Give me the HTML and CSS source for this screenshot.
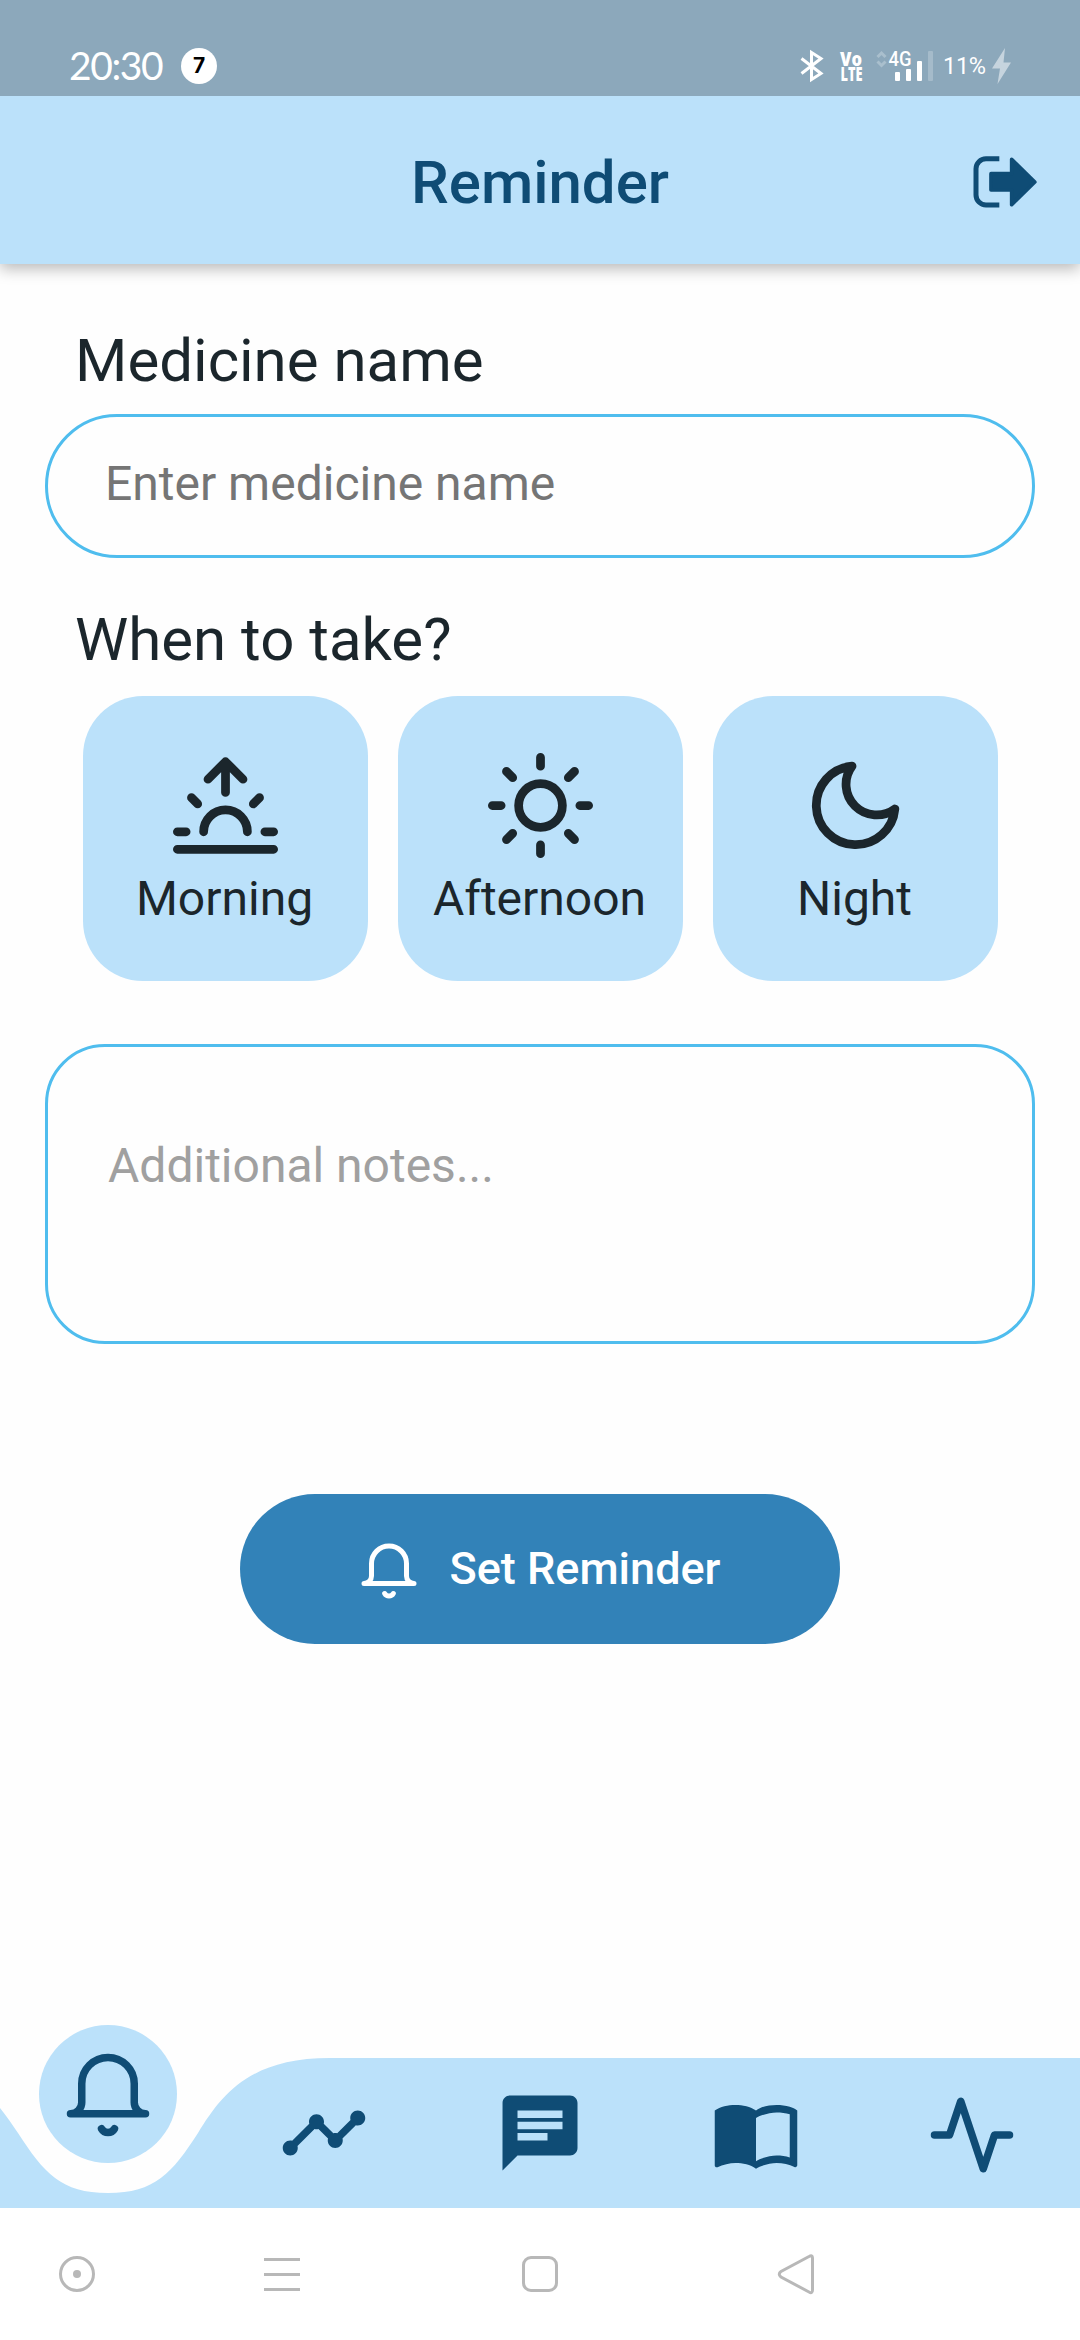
FILE: index.html
```html
<!DOCTYPE html>
<html lang="en">
<head>
<meta charset="utf-8">
<title>Reminder</title>
<link rel="stylesheet" href="styles.css">
</head>
<body>
<div class="screen">
  <div class="status">
    <span class="clock">20:30</span>
    <span class="count">7</span>
    <svg class="indicators" width="220" height="40" viewBox="796 46 220 40">
      <path class="bt" d="M801.5 58.500L821 73.500L811.500 79.500V52.500L821 58.500L801.500 73.500"/>
      <g class="volte">
        <text x="840" y="65.500" font-size="19" textLength="22" lengthAdjust="spacingAndGlyphs">Vo</text>
        <text x="840.500" y="81" font-size="19" textLength="22" lengthAdjust="spacingAndGlyphs">LTE</text>
      </g>
      <path class="updown" d="M877.500 57l4-4 4 4M877.500 61.500l4 4 4-4"/>
      <text class="gen" x="888.500" y="66" font-size="20" textLength="23" lengthAdjust="spacingAndGlyphs">4G</text>
      <rect class="bar" x="895" y="72" width="5" height="9" rx="1"/>
      <rect class="bar" x="906" y="69" width="5" height="12" rx="1"/>
      <rect class="bar" x="917" y="61" width="5" height="20" rx="1"/>
      <rect class="bar faint" x="928" y="51" width="5" height="30" rx="1"/>
      <text class="batt" x="943" y="74" font-size="23.500" textLength="43" lengthAdjust="spacing">11%</text>
      <path class="bolt" d="M1005 48L992 68.500H1000L997.500 84L1011 62.500H1003.500Z"/>
    </svg>
  </div>

  <header class="appbar">
    <h1 class="title">Reminder</h1>
    <svg class="logout" width="64" height="52" viewBox="219 196 192 156">
      <path class="bracket" d="M290.500 204.500H258a30 30 0 0 0-30 30V313a30 30 0 0 0 30 30h32.500"/>
      <path class="arrow" d="M273 249H335V206L404.500 274L335 342V298H273Z"/>
    </svg>
  </header>

  <main class="content">
    <label class="label">Medicine name</label>
    <div class="field">Enter medicine name</div>
    <div class="label label-when">When to take?</div>
    <div class="times">
      <div class="time">
        <svg class="line" width="105" height="105" viewBox="0 0 24 24"><path d="M17 18a5 5 0 0 0-10 0M12 2v7M4.220 10.220l1.420 1.420M1 18h2M21 18h2M18.360 11.640l1.420-1.420M23 22H1M8 6l4-4 4 4"/></svg>
        <span>Morning</span>
      </div>
      <div class="time">
        <svg class="line" width="105" height="105" viewBox="0 0 24 24"><circle cx="12" cy="12" r="5"/><path d="M12 1v2M12 21v2M4.220 4.220l1.420 1.420M18.360 18.360l1.420 1.420M1 12h2M21 12h2M4.220 19.780l1.420-1.420M18.360 5.640l1.420-1.420"/></svg>
        <span>Afternoon</span>
      </div>
      <div class="time">
        <svg class="line" width="105" height="105" viewBox="0 0 24 24"><path d="M21 12.790A9 9 0 1 1 11.210 3 7 7 0 0 0 21 12.790z"/></svg>
        <span>Night</span>
      </div>
    </div>
    <div class="notes">Additional notes...</div>
    <div class="button">
      <svg class="line" width="60" height="60" viewBox="0 0 24 24"><path d="M22 17H2a3 3 0 0 0 3-3V9a7 7 0 0 1 14 0v5a3 3 0 0 0 3 3zM13.730 21a2 2 0 0 1-3.460 0"/></svg>
      <span>Set Reminder</span>
    </div>
  </main>

  <nav class="tabs">
    <svg class="wave" width="1080" height="150" viewBox="0 2058 1080 150"><path d="M-2 2105.500C6 2115 12 2124 18 2133C44 2173 61 2193 108 2193S172 2173 198 2133C222 2094 250 2058 330 2058H1080V2208H-2Z"/></svg>
    <div class="tab active">
      <div class="bubble"><svg class="line" width="90" height="90" viewBox="0 0 24 24"><path d="M22 17H2a3 3 0 0 0 3-3V9a7 7 0 0 1 14 0v5a3 3 0 0 0 3 3zM13.730 21a2 2 0 0 1-3.460 0"/></svg></div>
    </div>
    <div class="tab"><svg class="solid" width="90" height="90" viewBox="0 0 24 24"><path d="M23 8c0 1.100-.9 2-2 2-.18 0-.35-.02-.51-.07l-3.560 3.550c.05.16.07.34.07.52 0 1.100-.9 2-2 2s-2-.9-2-2c0-.18.02-.36.07-.52l-2.550-2.550c-.16.05-.34.07-.52.07s-.36-.02-.52-.07l-4.550 4.560c.05.16.07.33.07.51 0 1.100-.9 2-2 2s-2-.9-2-2 .9-2 2-2c.18 0 .35.02.51.07l4.560-4.550C8.020 9.360 8 9.180 8 9c0-1.100.9-2 2-2s2 .9 2 2c0 .18-.02.36-.07.52l2.550 2.550c.16-.05.34-.07.52-.07s.36.02.52.07l3.550-3.560C19.020 8.350 19 8.180 19 8c0-1.100.9-2 2-2s2 .9 2 2z"/></svg></div>
    <div class="tab"><svg class="solid" width="90" height="90" viewBox="0 0 24 24"><path d="M20 2H4c-1.100 0-1.990.9-1.990 2L2 22l4-4h14c1.100 0 2-.9 2-2V4c0-1.100-.9-2-2-2zM6 6h12v2H6zM6 9h12v2H6zM6 12h8v2H6z"/></svg></div>
    <div class="tab"><svg class="solid" width="90" height="90" viewBox="0 0 24 24"><path d="M21 5c-1.110-.35-2.330-.5-3.500-.5-1.950 0-4.050.4-5.500 1.500-1.450-1.100-3.550-1.500-5.500-1.500S2.450 4.900 1 6v14.650c0 .25.25.5.5.5.1 0 .15-.05.25-.05C3.100 20.450 5.050 20 6.500 20c1.950 0 4.050.4 5.500 1.500 1.350-.85 3.800-1.500 5.500-1.500 1.650 0 3.350.3 4.750 1.050.1.05.15.05.25.05.25 0 .5-.25.5-.5V6c-.6-.45-1.250-.75-2-1zm0 13.500c-1.100-.35-2.300-.5-3.500-.5-1.700 0-4.150.65-5.500 1.500V8c1.350-.85 3.800-1.500 5.500-1.500 1.200 0 2.400.15 3.500.5v11.500z"/></svg></div>
    <div class="tab"><svg class="line pulse" width="90" height="90" viewBox="0 0 24 24"><path d="M22 12h-4l-3 9L9 3l-3 9H2"/></svg></div>
  </nav>

  <div class="sysnav">
    <svg width="44" height="44" viewBox="-22 -22 44 44"><circle r="16.500"/><circle class="dot" r="4"/></svg>
    <svg width="44" height="44" viewBox="-22 -22 44 44"><path d="M-18-14.500h36M-18 .5h36M-18 15.500h36"/></svg>
    <svg width="44" height="44" viewBox="-22 -22 44 44"><rect x="-16.500" y="-16.500" width="33" height="33" rx="7.500"/></svg>
    <svg width="44" height="44" viewBox="-22 -22 44 44"><path d="M13-17.500L-15-2.500Q-18.500 0-15 3L13 18Q16.500 20 16.500 16V-16Q16.500-19.500 13-17.500Z"/></svg>
  </div>
</div>
</body>
</html>
```
FILE: styles.css
```css
* { box-sizing: border-box; }
body {
  margin: 0;
  background: #fefefe;
  font-family: Roboto, "Noto Sans", sans-serif;
  color: #1b262c;
}
svg { display: block; flex: none; }
.screen {
  width: 1080px;
  height: 2340px;
  display: flex;
  flex-direction: column;
  overflow: hidden;
}

/* Status bar */
.status {
  position: relative;
  z-index: 1;
  height: 96px;
  padding: 36px 64px 0 69px;
  background: #8ca8bb;
  color: #fff;
  display: flex;
  align-items: center;
}
.clock {
  width: 112px;
  margin-top: -3px;
  font: 400 39px/60px Lato, sans-serif;
  letter-spacing: -1.400px;
}
.count {
  width: 36px;
  height: 36px;
  border-radius: 50%;
  background: #fff;
  color: #000;
  font: 700 21px/36px Inter, sans-serif;
  text-align: center;
}
.indicators { margin-left: auto; fill: #fff; }
.bt { fill: none; stroke: #fff; stroke-width: 3; }
.volte { font-family: "Open Sans", sans-serif; font-weight: 800; }
.gen { font-family: Roboto, sans-serif; font-weight: 500; }
.batt { font-family: Roboto, sans-serif; font-weight: 400; }
.updown { fill: none; stroke: #a9bfcd; stroke-width: 3; }
.faint { fill: #a5bbca; }
.bolt { fill: #c6d4de; }

/* App bar */
.appbar {
  position: relative;
  height: 168px;
  padding: 0 43px;
  background: #bbe1fa;
  box-shadow: 0 5px 14px rgba(0, 0, 0, 0.270);
  display: grid;
  grid-template-columns: 64px 1fr 64px;
  align-items: center;
}
.title {
  grid-column: 2;
  margin: 5px 0 0;
  font-size: 60px;
  line-height: 72px;
  font-weight: 500;
  text-align: center;
  color: #0f4c75;
}
.logout { margin-top: 3px; }
.bracket { fill: none; stroke: #0f4c75; stroke-width: 15; stroke-linecap: square; stroke-linejoin: round; }
.arrow { fill: #0f4c75; stroke: #0f4c75; stroke-width: 11; stroke-linejoin: round; }

/* Form */
.content {
  flex: 1;
  padding: 61px 45px 0;
  display: flex;
  flex-direction: column;
}
.label {
  height: 72px;
  margin-left: 30px;
  font-size: 60px;
  line-height: 72px;
}
.label-when { margin-top: 46px; }
.field {
  height: 144px;
  margin-top: 17px;
  padding: 0 57px;
  border: 3px solid #4fbdee;
  border-radius: 72px;
  font-size: 48px;
  line-height: 133px;
  color: #757575;
}
.times {
  margin-top: 20px;
  display: flex;
  justify-content: center;
  gap: 30px;
}
.time {
  width: 285px;
  height: 285px;
  padding-top: 56.500px;
  border-radius: 60px;
  background: #bbe1fa;
  display: flex;
  flex-direction: column;
  align-items: center;
  font-size: 48px;
  line-height: 56px;
}
.time span { margin: 13px 1px 0 0; }
.line {
  fill: none;
  stroke: #1b262c;
  stroke-width: 2;
  stroke-linecap: round;
  stroke-linejoin: round;
}
.notes {
  height: 300px;
  margin-top: 63px;
  padding: 91px 60px 0;
  border: 3px solid #4fbdee;
  border-radius: 60px;
  font-size: 48px;
  line-height: 56px;
  color: #a0a0a0;
}
.button {
  align-self: center;
  width: 600px;
  height: 150px;
  margin-top: 150px;
  border-radius: 75px;
  background: #3282b8;
  color: #fff;
  display: flex;
  justify-content: center;
  align-items: center;
  gap: 30px;
  font-size: 45px;
  font-weight: 500;
}
.button span { margin-top: -2px; }
.button .line { stroke: #fff; margin-top: 4px; }

/* Bottom tabs */
.tabs {
  position: relative;
  height: 150px;
  display: flex;
}
.wave {
  position: absolute;
  left: 0;
  top: 0;
  fill: #bbe1fa;
}
.tab {
  position: relative;
  width: 216px;
  padding-top: 30px;
  display: flex;
  justify-content: center;
}
.tab .line { stroke: #0f4c75; }
.tab .solid { fill: #0f4c75; fill-rule: evenodd; }
.tab .pulse { margin-top: 2px; }
.active { padding: 0; }
.bubble {
  width: 138px;
  height: 138px;
  margin-top: -33px;
  padding: 25px 24px;
  border-radius: 50%;
  background: #bbe1fa;
}

/* System navigation */
.sysnav {
  height: 132px;
  background: #fff;
  display: grid;
  grid-template-columns: 154px 256px 260px 252px;
  align-items: center;
  justify-items: center;
}
.sysnav svg { fill: none; stroke: #b8b8b8; stroke-width: 3; }
.sysnav .dot { fill: #b8b8b8; stroke: none; }
```
